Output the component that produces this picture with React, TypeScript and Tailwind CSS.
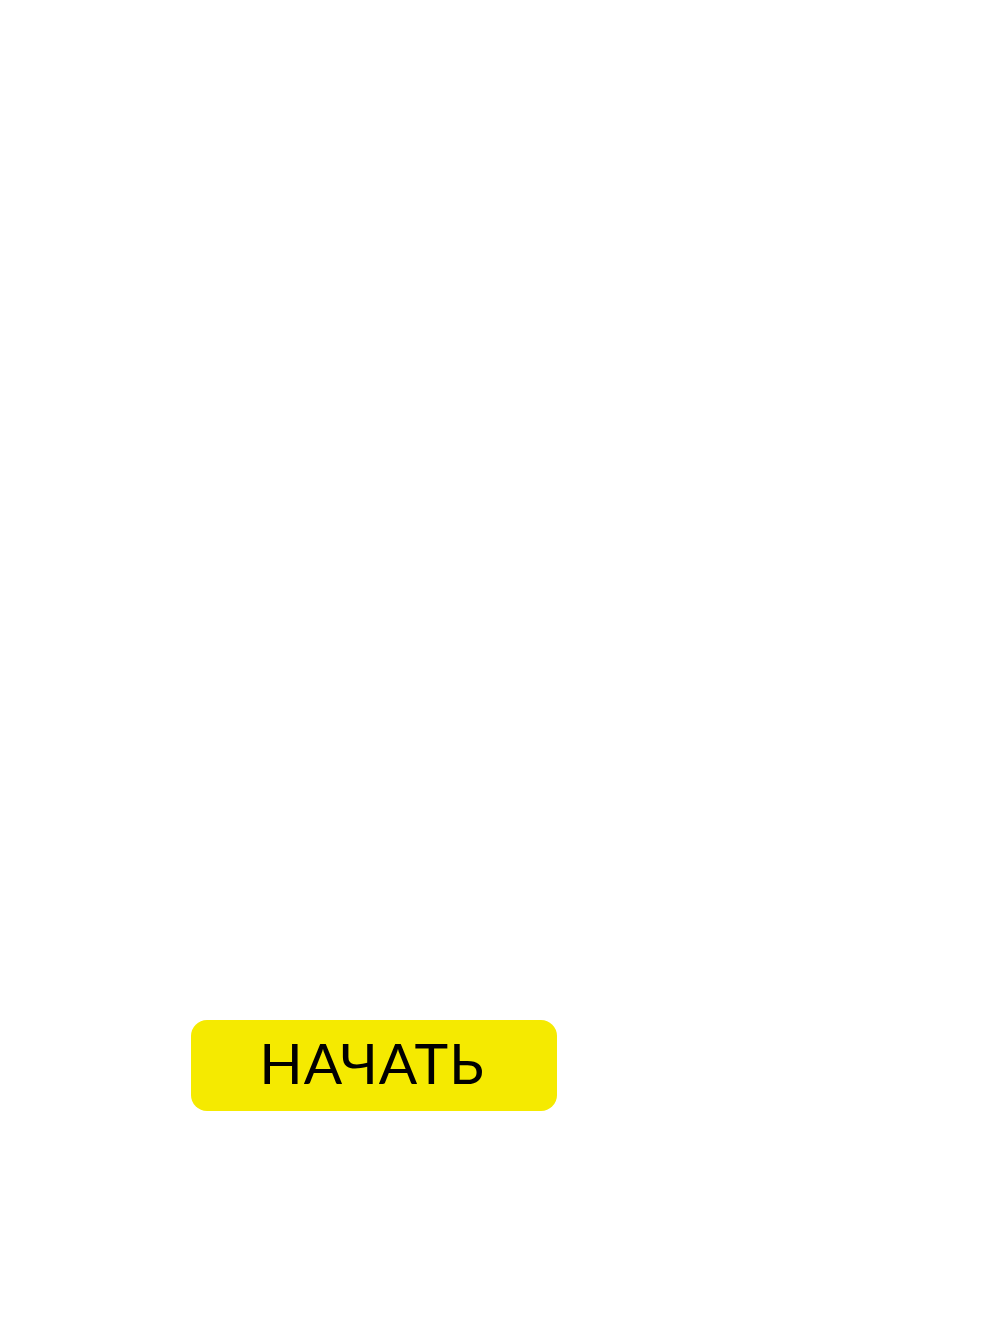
export default function App() {
  return (
    <div className="min-h-[1334px] w-full bg-white pt-[1020px] pl-[191px]">
      <button
        className="flex h-[91px] w-[366px] items-center justify-center rounded-[16px] bg-[#f5ea00] pr-[4px] pb-[7px] text-[57px] leading-none tracking-[1px] text-black"
        style={{ fontFamily: "Lato, 'Noto Sans', sans-serif" }}
      >
        НАЧАТЬ
      </button>
    </div>
  );
}
